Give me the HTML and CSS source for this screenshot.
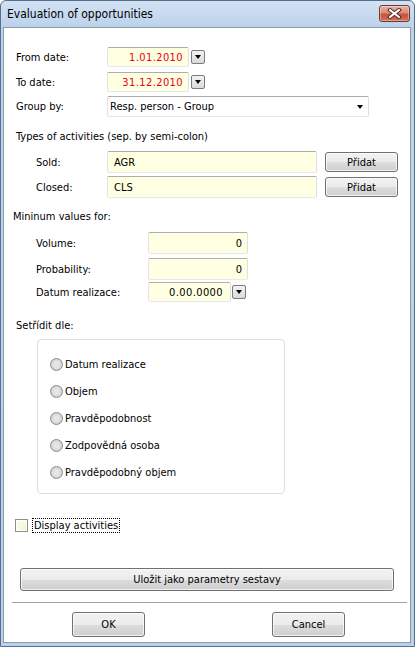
FILE: index.html
```html
<!DOCTYPE html>
<html lang="cs">
<head>
    <meta charset="UTF-8">
    <title>Evaluation of opportunities</title>
    <link rel="stylesheet" href="styles.css">
</head>
<body>
    <div class="window">
        <div class="titlebar">
            <span class="title">Evaluation of opportunities</span>
            <button class="close-btn">
                <svg width="15" height="11" viewBox="0 0 15 11">
                    <path d="M3 2 L12 9 M12 2 L3 9" stroke="#4a2a24" stroke-width="4" stroke-linecap="square"/>
                    <path d="M3 2 L12 9 M12 2 L3 9" stroke="#ffffff" stroke-width="2" stroke-linecap="square"/>
                </svg>
            </button>
        </div>

        <div class="panel">
            <div class="form">
                <div class="row row-from">
                    <span class="lbl">From date:</span>
                    <span class="field date-field">1.01.2010</span>
                    <span class="drop-btn"></span>
                </div>
                <div class="row row-to">
                    <span class="lbl">To date:</span>
                    <span class="field date-field">31.12.2010</span>
                    <span class="drop-btn"></span>
                </div>
                <div class="row row-group">
                    <span class="lbl">Group by:</span>
                    <div class="select">
                        <span>Resp. person - Group</span>
                        <span class="arrow"></span>
                    </div>
                </div>

                <div class="caption cap-types">Types of activities (sep. by semi-colon)</div>
                <div class="row sub row-sold">
                    <span class="lbl lbl-sub">Sold:</span>
                    <span class="field text-field">AGR</span>
                    <button class="btn add-btn">Přidat</button>
                </div>
                <div class="row sub row-closed">
                    <span class="lbl lbl-sub">Closed:</span>
                    <span class="field text-field">CLS</span>
                    <button class="btn add-btn">Přidat</button>
                </div>

                <div class="caption cap-min">Mininum values for:</div>
                <div class="row sub row-volume">
                    <span class="lbl lbl-num">Volume:</span>
                    <span class="field num-field">0</span>
                </div>
                <div class="row sub row-prob">
                    <span class="lbl lbl-num">Probability:</span>
                    <span class="field num-field">0</span>
                </div>
                <div class="row sub row-datum">
                    <span class="lbl lbl-num">Datum realizace:</span>
                    <span class="field datum-field">0.00.0000</span>
                    <span class="drop-btn drop-near"></span>
                </div>

                <div class="caption cap-sort">Setřídit dle:</div>
                <div class="groupbox">
                    <div class="radio-row"><span class="radio"></span>Datum realizace</div>
                    <div class="radio-row"><span class="radio"></span>Objem</div>
                    <div class="radio-row"><span class="radio"></span>Pravděpodobnost</div>
                    <div class="radio-row"><span class="radio"></span>Zodpovědná osoba</div>
                    <div class="radio-row"><span class="radio"></span>Pravděpodobný objem</div>
                </div>

                <div class="check-row">
                    <span class="checkbox"></span>
                    <span class="check-label">Display activities</span>
                </div>

                <button class="btn save-btn">Uložit jako parametry sestavy</button>
            </div>

            <div class="separator"></div>

            <div class="footer">
                <button class="btn footer-btn">OK</button>
                <button class="btn footer-btn">Cancel</button>
            </div>
        </div>
    </div>
</body>
</html>
```

FILE: styles.css
```css
* {
    margin: 0;
    padding: 0;
    box-sizing: border-box;
}

body {
    font-family: 'DejaVu Sans Condensed', 'Liberation Sans', sans-serif;
    font-size: 11px;
    color: #000;
    background: #fff;
}

.window {
    width: 415px;
    height: 647px;
    border: 1px solid #55708f;
    border-radius: 6px 6px 0 0;
    background: linear-gradient(#d3e2f3, #bcd3ec 26px, #b9d1ea);
    padding: 0 3px 3px 2px;
    display: flex;
    flex-direction: column;
}

.titlebar {
    height: 26px;
    display: flex;
    align-items: flex-start;
    justify-content: space-between;
}

.title {
    font-size: 12px;
    margin: 6px 0 0 4px;
    color: #000;
}

.close-btn {
    width: 31px;
    height: 17px;
    margin-top: 4px;
    margin-right: 1px;
    border: 1px solid #6d3a33;
    border-radius: 3px;
    background: linear-gradient(#e8b3a6, #d88a78 45%, #c7533d 55%, #d46f58);
    display: flex;
    align-items: center;
    justify-content: center;
    box-shadow: inset 0 0 0 1px rgba(255, 255, 255, 0.35);
}

.panel {
    flex: 1;
    background: #fff;
    border: 1px solid #8e9aa6;
    padding-top: 19px;
    display: flex;
    flex-direction: column;
}

.form {
    padding-left: 12px;
    display: flex;
    flex-direction: column;
    align-items: flex-start;
}

.row {
    display: flex;
    align-items: center;
}

.lbl {
    width: 91px;
}

.sub {
    padding-left: 20px;
}

.lbl-sub {
    width: 71px;
}

.lbl-num {
    width: 112px;
}

.field {
    display: flex;
    align-items: center;
    background: #ffffe1;
    border: 1px solid;
    border-color: #abadb3 #dbdfe6 #e3e9ef #e2e3ea;
    border-radius: 2px;
}

.date-field {
    width: 82px;
    height: 20px;
    justify-content: flex-end;
    padding-right: 5px;
    color: #e8001c;
    letter-spacing: 0.4px;
}

.drop-btn {
    width: 14px;
    height: 14px;
    margin-left: 2px;
    border: 1px solid #7b7b7b;
    border-radius: 2px;
    background: linear-gradient(#f4f4f4, #d9d9d9);
    position: relative;
}

.drop-btn::after {
    content: '';
    position: absolute;
    left: 3px;
    top: 4px;
    border-left: 3.5px solid transparent;
    border-right: 3.5px solid transparent;
    border-top: 4px solid #000;
}

.drop-near {
    margin-left: 1px;
}

.row-from {
    height: 20px;
}

.row-to {
    height: 20px;
    margin-top: 5px;
}

.row-group {
    height: 21px;
    margin-top: 4px;
}

.select {
    width: 262px;
    height: 21px;
    border: 1px solid;
    border-color: #abadb3 #dbdfe6 #e3e9ef #e2e3ea;
    border-radius: 2px;
    display: flex;
    align-items: center;
    justify-content: space-between;
    padding: 0 5px 0 2px;
}

.arrow {
    border-left: 3.5px solid transparent;
    border-right: 3.5px solid transparent;
    border-top: 4px solid #000;
}

.caption {
    line-height: 14px;
}

.cap-types {
    margin-top: 13px;
}

.cap-min {
    margin-top: 12px;
    margin-left: -3px;
}

.cap-sort {
    margin-top: 17px;
}

.row-sold {
    height: 22px;
    margin-top: 7px;
}

.row-closed {
    height: 22px;
    margin-top: 3px;
}

.text-field {
    width: 210px;
    height: 22px;
    padding-left: 6px;
}

.btn {
    font-family: inherit;
    font-size: 11px;
    color: #000;
    border: 1px solid #707070;
    border-radius: 3px;
    background: linear-gradient(#f2f2f2, #ebebeb 50%, #dddddd 51%, #cfcfcf);
    box-shadow: inset 0 0 0 1px rgba(255, 255, 255, 0.7);
    flex-shrink: 0;
}

.add-btn {
    width: 73px;
    height: 20px;
    margin-left: 8px;
}

.row-volume {
    height: 22px;
    margin-top: 8px;
}

.row-prob {
    height: 22px;
    margin-top: 4px;
}

.row-datum {
    height: 20px;
    margin-top: 2px;
}

.num-field {
    width: 100px;
    height: 22px;
    justify-content: flex-end;
    padding-right: 5px;
}

.datum-field {
    width: 83px;
    height: 20px;
    justify-content: flex-end;
    padding-right: 7px;
    letter-spacing: 0.4px;
}

.groupbox {
    width: 248px;
    height: 155px;
    margin: 6px 0 0 21px;
    border: 1px solid #d5dfe5;
    border-radius: 4px;
    padding: 11px 0 0 12px;
}

.radio-row {
    height: 27px;
    display: flex;
    align-items: center;
}

.radio {
    width: 13px;
    height: 13px;
    margin-right: 2px;
    border: 1px solid #8b8b8b;
    border-radius: 50%;
    background: radial-gradient(circle at 50% 50%, #e6e6e6 30%, #cfcfcf 75%, #f2f2f2);
}

.check-row {
    height: 14px;
    margin: 24px 0 0 -1px;
    display: flex;
    align-items: center;
}

.checkbox {
    width: 13px;
    height: 13px;
    border: 1px solid #8e8f8f;
    background: linear-gradient(135deg, #fdfde8, #f4f4d0);
    box-shadow: inset 0 0 0 1px #fff;
}

.check-label {
    margin-left: 5px;
    padding: 0 1px;
    outline: 1px dotted #000;
    line-height: 13px;
}

.save-btn {
    width: 374px;
    height: 23px;
    margin: 36px 0 0 4px;
}

.separator {
    height: 1px;
    background: #a0a0a0;
    margin: 11px 3px 0 8px;
}

.footer {
    display: flex;
    gap: 127px;
    padding-left: 68px;
    margin-top: 9px;
}

.footer-btn {
    width: 73px;
    height: 25px;
}
```
